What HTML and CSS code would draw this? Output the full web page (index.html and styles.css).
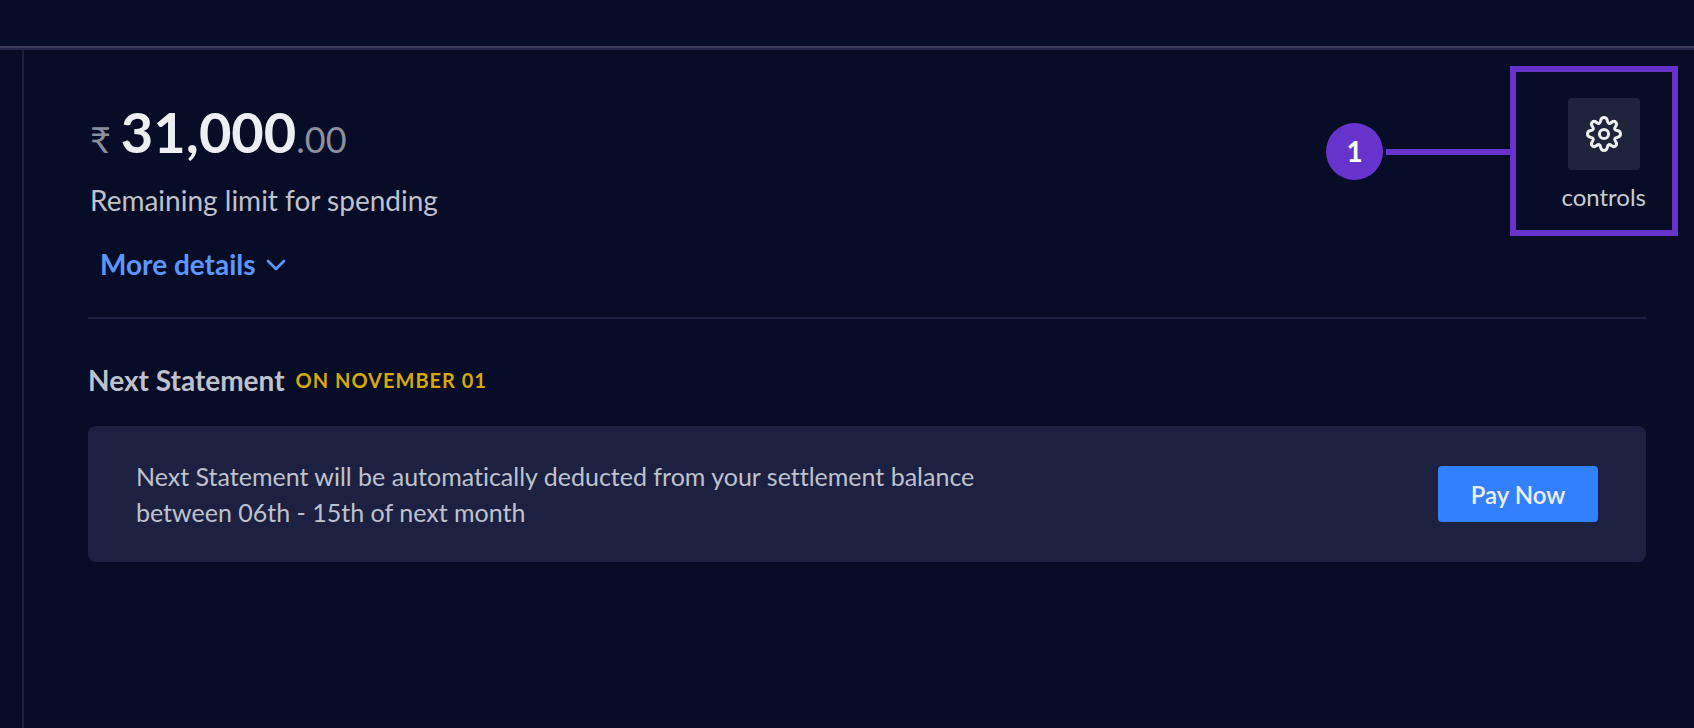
FILE: index.html
```html
<!DOCTYPE html>
<html lang="en">
<head>
    <meta charset="UTF-8">
    <meta name="viewport" content="width=device-width, initial-scale=1.0">
    <title>Spending Limit</title>
    <link rel="stylesheet" href="styles.css">
</head>
<body>
    <header class="topbar"></header>

    <div class="layout">
        <aside class="sidebar"></aside>

        <main class="content">
            <section class="summary">
                <div class="limit">
                    <div class="amount">
                        <span class="currency">₹</span>
                        <span class="value">31,000<span class="paise">.00</span></span>
                    </div>
                    <p class="caption">Remaining limit for spending</p>
                    <button type="button" class="more">
                        More details
                        <svg width="20" height="14" viewBox="0 0 20 14" fill="none" stroke="currentColor" stroke-width="2.6" stroke-linecap="round" stroke-linejoin="round"><path d="M2 4l8 8 8-8"/></svg>
                    </button>
                </div>

                <div class="controls-wrap">
                    <button type="button" class="controls">
                        <span class="tile">
                            <svg width="36" height="36" viewBox="0 0 36 36" fill="none" stroke="currentColor" stroke-width="3" stroke-linejoin="round">
                                <path d="M14.6 4.9C14.9 2.7 16.2 1.5 18 1.5S21.1 2.7 21.4 4.9C21.7 7.4 23.4 8.1 25.3 6.5C27.1 5.2 28.9 5.3 29.8 6.2S30.8 8.9 29.5 10.7C27.9 12.6 28.6 14.3 31.1 14.6C33.3 14.9 34.5 16.2 34.5 18S33.3 21.1 31.1 21.4C28.6 21.7 27.9 23.4 29.5 25.3C30.8 27.1 30.7 28.9 29.8 29.8S27.1 30.8 25.3 29.5C23.4 27.9 21.7 28.6 21.4 31.1C21.1 33.3 19.8 34.5 18 34.5S14.9 33.3 14.6 31.1C14.3 28.6 12.6 27.9 10.7 29.5C8.9 30.8 7.1 30.7 6.2 29.8S5.2 27.1 6.5 25.3C8.1 23.4 7.4 21.7 4.9 21.4C2.7 21.1 1.5 19.8 1.5 18S2.7 14.9 4.9 14.6C7.4 14.3 8.1 12.6 6.5 10.7C5.2 8.9 5.3 7.1 6.2 6.2S8.9 5.2 10.7 6.5C12.6 8.1 14.3 7.4 14.6 4.9Z"/>
                                <circle cx="18" cy="18" r="4.6"/>
                            </svg>
                        </span>
                        controls
                    </button>
                    <div class="highlight"></div>
                    <div class="callout">
                        <span class="step">1</span>
                        <span class="line"></span>
                    </div>
                </div>
            </section>

            <section class="statement">
                <h2>Next Statement <span class="date">ON NOVEMBER 01</span></h2>
                <div class="panel">
                    <p>Next Statement will be automatically deducted from your settlement balance between 06th - 15th of next month</p>
                    <button type="button" class="pay">Pay Now</button>
                </div>
            </section>
        </main>
    </div>
</body>
</html>
```
FILE: styles.css
```css
* {
    box-sizing: border-box;
}

body {
    margin: 0;
    min-height: 100vh;
    display: flex;
    flex-direction: column;
    background-color: #070c27;
    color: #bfc2cc;
    font-family: Lato, 'Liberation Sans', sans-serif;
    font-variant-ligatures: none;
}

h2,
p {
    margin: 0;
}

button {
    border: none;
    padding: 0;
    background: none;
    font-family: inherit;
    cursor: pointer;
}

.topbar {
    height: 50px;
    border-bottom: 2px solid #25284a;
    box-shadow: inset 0 -2px #393b57;
}

.layout {
    flex: 1;
    display: flex;
}

.sidebar {
    width: 24px;
    border-right: 2px solid #1c203c;
}

.content {
    flex: 1;
    padding: 48px 48px 48px 64px;
}

.summary {
    display: flex;
    justify-content: space-between;
    align-items: flex-start;
    padding-bottom: 35px;
    border-bottom: 2px solid #1b2040;
}

.amount {
    display: flex;
    align-items: baseline;
    gap: 10px;
    padding-left: 2px;
    line-height: 68px;
}

.currency,
.paise {
    color: #8c8f9d;
    font-size: 36px;
    font-weight: 400;
}

.value {
    color: #eceef0;
    font-size: 56px;
    font-weight: 700;
}

.caption {
    margin-top: 9px;
    padding-left: 2px;
    font-size: 28px;
    line-height: 36px;
}

.more {
    display: flex;
    align-items: center;
    gap: 10px;
    margin-top: 28px;
    padding-left: 12px;
    color: #5c97ff;
    font-size: 28px;
    font-weight: 700;
    line-height: 36px;
}

.controls-wrap {
    position: relative;
}

.controls {
    display: flex;
    flex-direction: column;
    align-items: center;
    gap: 11px;
    color: #c9ccd4;
    font-size: 24px;
    line-height: 32px;
}

.tile {
    display: flex;
    justify-content: center;
    align-items: center;
    width: 72px;
    height: 72px;
    background-color: #20233c;
    border-radius: 4px;
    color: #eceef0;
}

.highlight {
    position: absolute;
    top: -32px;
    right: -32px;
    width: 168px;
    height: 170px;
    border: 6px solid #6633cc;
    pointer-events: none;
}

.callout {
    position: absolute;
    top: 25px;
    right: 136px;
    display: flex;
    align-items: center;
    gap: 3px;
}

.step {
    width: 57px;
    height: 57px;
    background-color: #6633cc;
    border-radius: 50%;
    color: #fff;
    font-size: 28px;
    font-weight: 700;
    line-height: 57px;
    text-align: center;
}

.line {
    width: 124px;
    height: 6px;
    background-color: #6633cc;
}

.statement h2 {
    display: flex;
    align-items: center;
    gap: 11px;
    margin: 43px 0 28px;
    font-size: 28px;
    font-weight: 700;
    line-height: 36px;
}

.date {
    color: #d6a90b;
    font-size: 20px;
    font-weight: 700;
    letter-spacing: 1px;
}

.panel {
    display: flex;
    justify-content: space-between;
    align-items: center;
    padding: 32px 48px;
    background-color: #1c2142;
    border-radius: 8px;
}

.panel p {
    max-width: 880px;
    font-size: 25px;
    line-height: 36px;
}

.pay {
    width: 160px;
    height: 56px;
    background-color: #3380ff;
    border-radius: 4px;
    color: #eceef0;
    font-size: 24px;
    font-weight: 600;
}
```
